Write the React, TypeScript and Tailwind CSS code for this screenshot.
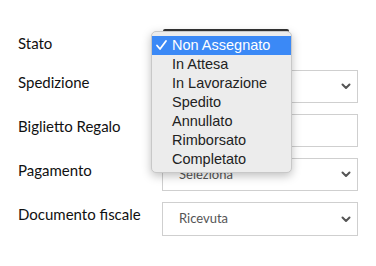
import React from "react";

const Chevron = () => (
  <svg width="10" height="7" viewBox="0 0 10 7" className="shrink-0">
    <path d="M1.5 1.5 L5 5 L8.5 1.5" fill="none" stroke="#555" strokeWidth="2" strokeLinecap="round" strokeLinejoin="round" />
  </svg>
);

function Row({ label, mt, value, select = true, h = "h-[33px]" }: { label: string; mt: string; value?: string; select?: boolean; h?: string }) {
  return (
    <div className={`flex items-start ${mt}`}>
      <div className="w-[144px] pt-[2px] text-[15px] leading-[20px] text-[#111]">{label}</div>
      <div className={`w-[196px] ${h} border border-[#cfcfcf] bg-white flex items-center pl-[16px] pr-[6px]`}>
        <span className="flex-1 text-[13px] text-[#555]">{value}</span>
        {select && <Chevron />}
      </div>
    </div>
  );
}

export default function App() {
  const items = ["In Attesa", "In Lavorazione", "Spedito", "Annullato", "Rimborsato", "Completato"];
  return (
    <div className="relative w-[376px] h-[266px] bg-white overflow-hidden" style={{ fontFamily: "Lato, 'Open Sans', sans-serif" }}>
      <div className="pl-[18px] pt-[31px] flex flex-col">
        <div className="flex items-start">
          <div className="w-[144px] pt-[2px] text-[15px] leading-[20px] text-[#111]">Stato</div>
          <div className="w-[196px] h-[33px]" />
        </div>
        <Row label="Spedizione" mt="mt-[6px]" value="" />
        <Row label="Biglietto Regalo" mt="mt-[11px]" select={false} />
        <Row label="Pagamento" mt="mt-[11px]" value="Seleziona" />
        <Row label="Documento fiscale" mt="mt-[11px]" value="Ricevuta" h="h-[34px]" />
      </div>
      <div className="absolute left-[163px] top-[29px] w-[126px] h-[3px] bg-[#333] rounded-t-[2px]" />
      <div
        className="absolute left-[151px] top-[31px] w-[141px] h-[142px] rounded-[5px] bg-[#ececec] border border-[#c8c8c8] shadow-[0_3px_10px_rgba(0,0,0,0.25)] pt-[4px]"
        style={{ fontFamily: "'Liberation Sans', Arial, sans-serif" }}
      >
        <div className="h-[19px] bg-[#3b89f6] text-white text-[14.5px] leading-[19px] flex items-center">
          <svg width="20" height="19" viewBox="0 0 20 19" className="shrink-0">
            <path d="M5 9.5 L8 13 L14 5" fill="none" stroke="#fff" strokeWidth="1.8" strokeLinecap="round" strokeLinejoin="round" />
          </svg>
          <span>Non Assegnato</span>
        </div>
        {items.map((t) => (
          <div key={t} className="h-[19px] text-[14.5px] leading-[19px] text-[#222] pl-[20px]">
            {t}
          </div>
        ))}
      </div>
    </div>
  );
}
